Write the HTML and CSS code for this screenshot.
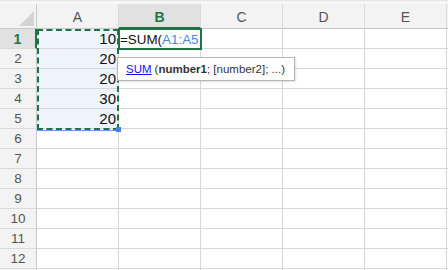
FILE: index.html
```html
<!DOCTYPE html>
<html>
<head>
<meta charset="utf-8">
<link rel="stylesheet" href="styles.css">
</head>
<body>
<div class="wrap">
  <div class="sheet">
    <div class="corner"><span class="tri"></span></div>
    <div class="colh">A</div>
    <div class="colh sel">B</div>
    <div class="colh">C</div>
    <div class="colh">D</div>
    <div class="colh">E</div>
    <div class="colh edge"></div>

    <div class="rowh sel">1</div><div class="cell hl">10</div><div class="cell"></div><div class="cell"></div><div class="cell"></div><div class="cell"></div><div class="cell edge"></div>
    <div class="rowh">2</div><div class="cell hl">20</div><div class="cell"></div><div class="cell"></div><div class="cell"></div><div class="cell"></div><div class="cell edge"></div>
    <div class="rowh">3</div><div class="cell hl">20</div><div class="cell"></div><div class="cell"></div><div class="cell"></div><div class="cell"></div><div class="cell edge"></div>
    <div class="rowh">4</div><div class="cell hl">30</div><div class="cell"></div><div class="cell"></div><div class="cell"></div><div class="cell"></div><div class="cell edge"></div>
    <div class="rowh">5</div><div class="cell hl">20</div><div class="cell"></div><div class="cell"></div><div class="cell"></div><div class="cell"></div><div class="cell edge"></div>
    <div class="rowh">6</div><div class="cell"></div><div class="cell"></div><div class="cell"></div><div class="cell"></div><div class="cell"></div><div class="cell edge"></div>
    <div class="rowh">7</div><div class="cell"></div><div class="cell"></div><div class="cell"></div><div class="cell"></div><div class="cell"></div><div class="cell edge"></div>
    <div class="rowh">8</div><div class="cell"></div><div class="cell"></div><div class="cell"></div><div class="cell"></div><div class="cell"></div><div class="cell edge"></div>
    <div class="rowh">9</div><div class="cell"></div><div class="cell"></div><div class="cell"></div><div class="cell"></div><div class="cell"></div><div class="cell edge"></div>
    <div class="rowh">10</div><div class="cell"></div><div class="cell"></div><div class="cell"></div><div class="cell"></div><div class="cell"></div><div class="cell edge"></div>
    <div class="rowh">11</div><div class="cell"></div><div class="cell"></div><div class="cell"></div><div class="cell"></div><div class="cell"></div><div class="cell edge"></div>
    <div class="rowh">12</div><div class="cell"></div><div class="cell"></div><div class="cell"></div><div class="cell"></div><div class="cell"></div><div class="cell edge"></div>
    <div class="rowh"></div><div class="cell"></div><div class="cell"></div><div class="cell"></div><div class="cell"></div><div class="cell"></div><div class="cell edge"></div>

    <div class="marquee"></div>
    <div class="handle"></div>
    <div class="active">=SUM(<span class="ref">A1:A5</span></div>
    <div class="tip"><span class="fn">SUM</span> (<b>number1</b>; [number2]; ...)</div>
  </div>
</div>
</body>
</html>
```

FILE: styles.css
```css
html, body {
  margin: 0;
  padding: 0;
  background: #ffffff;
  overflow: hidden;
}
.wrap {
  width: 448px;
  height: 270px;
  overflow: hidden;
  padding-top: 3px;
  box-sizing: border-box;
  border-top: 1px solid #e6e6e6;
  background: #f6f6f6;
}
.sheet {
  position: relative;
  display: grid;
  grid-template-columns: 37px repeat(5, 82px) 20px;
  grid-template-rows: 25px repeat(13, 20px);
  font-family: "Liberation Sans", Arial, sans-serif;
  background: #fff;
}
.corner {
  position: relative;
  background: #f3f3f3;
  border-right: 1px solid #c9c9c9;
  border-bottom: 1px solid #c9c9c9;
}
.tri {
  position: absolute;
  right: 2px;
  bottom: 2px;
  width: 0;
  height: 0;
  border-left: 15px solid transparent;
  border-bottom: 15px solid #d3d3d3;
}
.colh {
  background: #f3f3f3;
  border-bottom: 1px solid #c9c9c9;
  border-right: 1px solid #dadada;
  color: #555;
  font-size: 14px;
  display: flex;
  align-items: center;
  justify-content: center;
  padding-top: 2px;
  box-sizing: border-box;
}
.colh.sel {
  background: #e1e1e1;
  color: #217346;
  font-weight: bold;
  border-bottom: 2px solid #217346;
}
.rowh {
  background: #f3f3f3;
  border-right: 1px solid #c9c9c9;
  border-bottom: 1px solid #dadada;
  color: #555;
  font-size: 13.5px;
  display: flex;
  align-items: center;
  justify-content: center;
}
.rowh.sel {
  background: #e1e1e1;
  color: #217346;
  font-weight: bold;
  font-size: 14px;
  border-right: 2px solid #217346;
}
.cell {
  border-right: 1px solid #d6d6d6;
  border-bottom: 1px solid #d6d6d6;
  font-size: 15px;
  color: #111;
  display: flex;
  align-items: center;
  justify-content: flex-end;
  padding-right: 2px;
}
.cell.hl {
  background: #eef3fc;
}
.marquee {
  position: absolute;
  left: 37px;
  top: 25px;
  width: 82px;
  height: 101px;
  box-sizing: border-box;
  border: 2px dashed #217346;
}
.marquee::after {
  content: "";
  position: absolute;
  left: -2px;
  right: -2px;
  bottom: -3px;
  height: 1px;
  background: #6a98ea;
}
.handle {
  position: absolute;
  left: 116px;
  top: 123px;
  width: 5px;
  height: 5px;
  background: #4a7fe0;
}
.active {
  position: absolute;
  left: 118px;
  top: 24px;
  width: 84px;
  height: 22px;
  box-sizing: border-box;
  border: 2px solid #217346;
  background: #fff;
  font-size: 13.4px;
  color: #111;
  display: flex;
  align-items: center;
  padding-left: 0;
  white-space: nowrap;
}
.ref {
  color: #4a86e8;
}
.tip {
  position: absolute;
  left: 117px;
  top: 53px;
  width: 178px;
  height: 24px;
  box-sizing: border-box;
  border: 1px solid #b5b5b5;
  background: #fff;
  box-shadow: 1px 1px 2px rgba(0,0,0,0.12);
  font-size: 11.5px;
  color: #333;
  display: flex;
  align-items: center;
  padding-left: 8px;
  white-space: nowrap;
}
.fn {
  color: #1a0dff;
  text-decoration: underline;
  margin-right: 3px;
}
```
